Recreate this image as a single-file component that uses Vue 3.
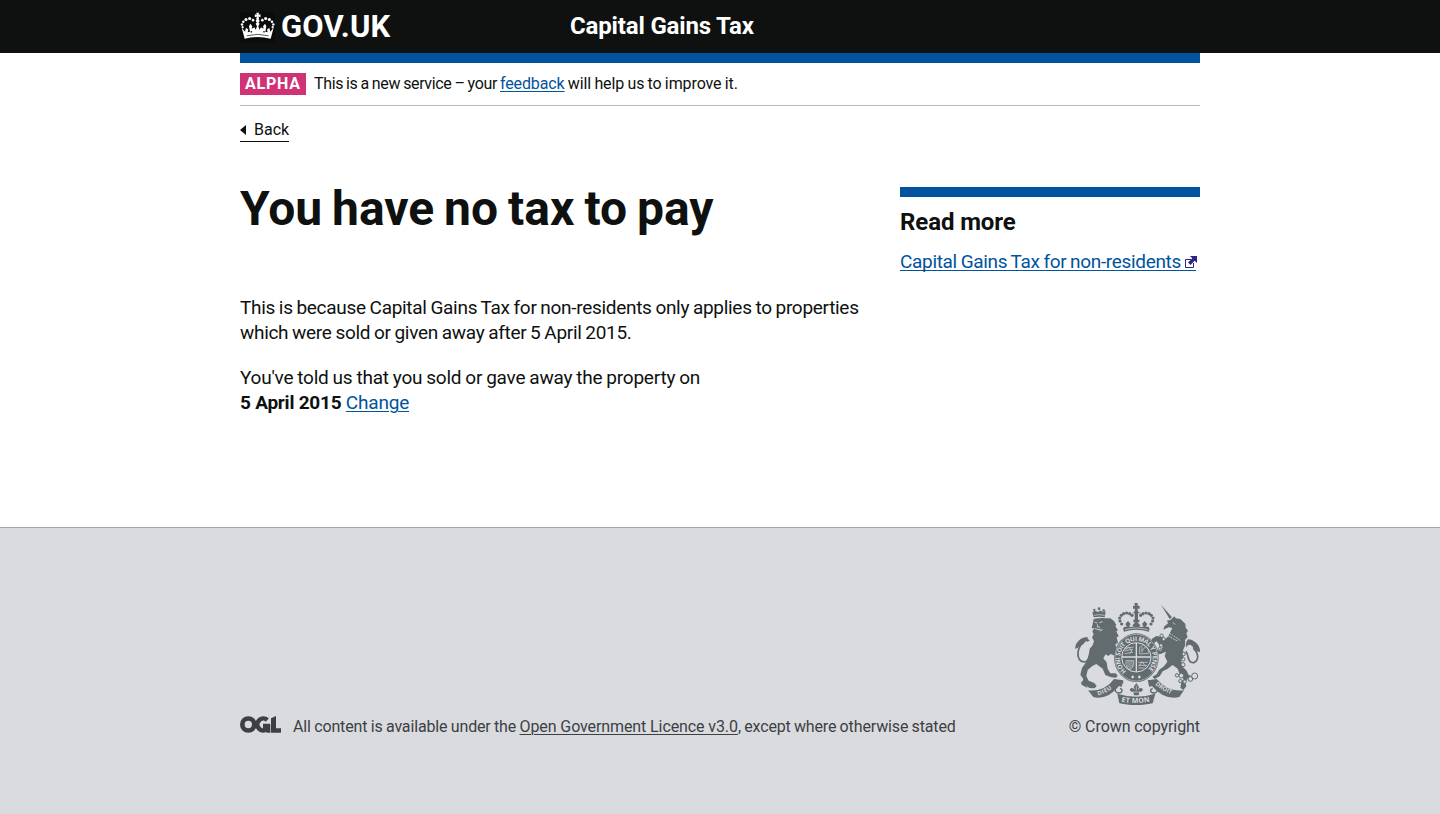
<script setup>
const crownPearls = [
  [36, 73, 3.8], [38, 81, 3.4], [40, 65, 3.8], [48, 58, 4.6], [59, 55, 4.6], [69, 60, 4],
  [130, 73, 3.8], [128, 81, 3.4], [126, 65, 3.8], [118, 58, 4.6], [107, 55, 4.6], [97, 60, 4],
]
const archPearls = [
  [185, 87], [180, 78], [179, 69], [184, 61], [191, 56], [200, 54], [209, 56], [216, 61],
  [273, 87], [278, 78], [279, 69], [274, 61], [267, 56], [258, 54], [249, 56], [242, 61],
]
const chain = [[305, 122, 5], [311, 132, 5], [303, 151, 5], [299, 161, 4], [371, 177, 5], [370, 193, 5], [369, 209, 6], [351, 241, 5], [364, 242, 7], [361, 258, 5], [374, 260, 5], [391, 252, 7], [404, 243, 9]]
</script>

<template>
  <div class="page">
    <header class="top">
      <div class="wrap top-row">
        <a class="logo">
          <svg class="crown" viewBox="30 36 105 92" aria-hidden="true">
            <rect x="30" y="36" width="105" height="92" fill="#0a0b0b" />
            <g fill="#fff">
              <path d="M78.500 38h9l-2 6 6-2v9l-6-2 2 8h-9l2-8-6 2v-9l6 2z" />
              <circle cx="83" cy="62" r="5.500" />
              <circle v-for="(p, i) in crownPearls" :key="i" :cx="p[0]" :cy="p[1]" :r="p[2]" />
              <path d="M35 82l10 13 3-12 7 5-2 8 7-1-3-17 4-7 6 7-2 8 8-5 4 8 4-11-4-7 6-7 6 7-4 7 4 11 4-8 8 5-2-8 6-7 4 7-3 17 7 1-2-8 7-5 3 12 10-13-9 34Q83 105 44 116z" />
            </g>
            <g fill="#0a0b0b"><circle cx="64" cy="95" r="2.500" /><circle cx="102" cy="95" r="2.500" /></g>
            <path d="M50 107Q83 98 116 107" fill="none" stroke="#0a0b0b" stroke-width="2" />
          </svg>
          <span class="brand">GOV.UK</span>
        </a>
        <span class="service">Capital Gains Tax</span>
      </div>
    </header>

    <div class="wrap">
      <div class="blue-bar"></div>
      <div class="phase">
        <strong class="tag">ALPHA</strong>
        <span><span class="intro">This is a new service – your </span><a class="link feedback">feedback</a><span class="outro"> will help us to improve it.</span></span>
      </div>
      <a class="back"><i class="arrow"></i><span>Back</span></a>

      <main class="columns">
        <section class="content">
          <h1>You have no tax to pay</h1>
          <p><span class="reason">This is because Capital Gains Tax for non-residents only applies to properties<br />which were sold or given away after 5 April 2015.</span></p>
          <p><span class="answer">You've told us that you sold or gave away the property on</span><br /><strong class="date">5 April 2015 </strong><a class="link change">Change</a></p>
        </section>
        <aside>
          <h2>Read more</h2>
          <a class="external"><span>Capital Gains Tax for non-residents</span>
            <svg viewBox="0 0 12 12" aria-hidden="true"><path d="M6 3.500H.5v8h8V7" fill="none" stroke="#2e2583" /><path d="M5 0h7v7L9.700 4.700 5.500 9 3 6.500 7.300 2.300z" fill="#2e2583" /></svg>
          </a>
        </aside>
      </main>
    </div>

    <footer>
      <div class="wrap foot">
        <div class="licence">
          <svg class="ogl" viewBox="0 0 123 51" aria-hidden="true">
            <g fill="none" stroke="#3c4044" stroke-width="14">
              <circle cx="25" cy="25.500" r="18" />
              <path d="M82 12A18 18 0 1 0 83 38V30H69" />
            </g>
            <path d="M76 25h15v25H80zM93 7l15-7v37h15v13H93z" fill="#3c4044" />
          </svg>
          <span><span class="licence-start">All content is available under the </span><a class="licence-link">Open Government Licence v3.0</a><span class="licence-end">, except where otherwise stated</span></span>
        </div>
        <div class="copyright">
          <svg class="arms" viewBox="45 24 375 306" aria-hidden="true">
            <defs>
              <path id="motto" d="M200 228A49 50 0 1 1 258 228" />
              <path id="left-scroll" d="M115 302Q145 292 172 268" />
              <path id="right-scroll" d="M285 269Q312 292 350 303" />
              <path id="mid-scroll" d="M184 320Q228 329 273 319" />
            </defs>
            <g fill="#626c6e">
              <!-- lion -->
              <path d="M101 67L97 52l8-5 10 4 5-5 7 4 10-1-3 18Q118 63 101 67z" />
              <circle cx="117" cy="41" r="4" /><circle cx="103" cy="45" r="3.500" /><circle cx="131" cy="46" r="3.500" />
              <path d="M101 72Q120 68 139 70L151 70 162 78 169 90 166 94 174 106 169 109 176 124 170 127 174 143 166 148 169 158 181 166 174 174 181 181 165 182 152 177 145 183 137 178 130 190 140 202 143 221 151 235 167 235 173 242 168 248 154 247 136 240 128 221 109 207 97 213 83 225 79 243 86 257 103 264 110 273 104 280 88 279 80 272 71 272 66 263 70 252 61 239 66 219 77 203 86 184 89 161 98 151 102 139 96 127 101 118 97 109 103 100 95 100 98 87z" />
              <path d="M83 279l-18-10-2-9 12 1z" />
              <path d="M78 138Q65 155 46 162 44 148 58 135 68 126 83 126 80 132 90 136 81 143 78 138z" />
              <path d="M61 152C47 178 55 201 74 201C91 198 84 181 93 169" fill="none" stroke="#626c6e" stroke-width="5" />
              <!-- unicorn -->
              <path d="M303 29L336 67 329 72z" />
              <path d="M310 104L313 94 325 84 320 77 332 74 343 64 347 70 361 72 376 86 377 98 384 107 379 115 383 126 375 135 376 151 369 166 373 181 364 195 366 214 379 226 386 240 393 242 382 252 376 263 379 274 370 285 361 278 364 262 371 252 361 243 353 221 338 210 322 222 308 229 299 244 284 252 277 245 290 238 297 225 312 214 322 200 314 183 318 170 300 178 286 174 290 165 303 167 309 153 298 150 290 139 277 147 275 132 289 123 306 125 315 134 325 123 337 99 326 97z" />
              <path d="M384 133Q395 132 406 142 421 154 420 171 405 169 399 163 402 155 392 150 382 147 379 158 376 141 384 133z" />
              <path d="M401 160C425 186 407 208 394 202C379 194 389 180 377 169" fill="none" stroke="#626c6e" stroke-width="5" />
              <!-- crown -->
              <path d="M223 24h10v8h6v9h-7l3 10 8 4H216l7-4 2-10h-6v-9h6z" />
              <circle v-for="(p, i) in archPearls" :key="i" :cx="p[0]" :cy="p[1]" r="4.800" />
              <path d="M224 54h10v20h4v8h-18v-8h4zM189 101l4-6h8l-5-8 8-9 8 9-5 8h14l-4-4 12-12 12 12-4 4h14l-5-8 8-9 8 9-5 8h8l4 6-3 9Q229 98 192 110z" />
              <!-- garter -->
              <ellipse cx="229" cy="188" rx="67" ry="73" />
              <!-- scrolls -->
              <path d="M84 286Q134 291 162 252L190 256 185 276 177 273Q142 316 100 306z" />
              <path d="M372 286Q322 291 290 252L263 256 268 276 276 273Q312 316 358 306z" />
              <path d="M172 296Q229 314 286 296L278 325Q228 336 178 325z" />
            </g>
            <g fill="none" stroke="#626c6e" stroke-width="4">
              <path d="M190 262C163 272 160 290 174 294C188 294 190 284 180 280" />
              <path d="M268 262C295 272 298 290 284 294C270 294 268 284 278 280" />
            </g>
            <g fill="none" stroke="#dadbdf">
              <ellipse cx="229" cy="188" rx="64" ry="70" stroke-width="1.500" />
              <circle cx="229" cy="187" r="44" stroke-width="3" />
              <path d="M229 144v86M186 186h86" stroke-width="4" />
              <path d="M193 160l28-4M193 168l26-5M194 176l25-4M235 202h28M235 211h25M235 219h18M239 157l11-8 15 14v12l-26 2zM198 197h23v12q-4 12-11 16-10-6-12-16zM204 198v20M210 198v25M216 198v19" stroke-width="2" />
              <path d="M197 164l9-8 10 12-8 7M237 214l9-14 13 17M246 156v16M256 156l-11 12" stroke-width="2" />
              <path d="M195 104Q229 94 263 104" stroke-width="2" />
              <path d="M102 61Q118 57 134 61" stroke-width="2" />
              <path d="M322 111Q342 122 362 138M318 119Q336 129 354 139" stroke-width="3" stroke-dasharray="5 3" />
              <path d="M104 82l8 2M118 83l10-3M113 88l-1 8 8 1M104 100l10 4 8-1M128 104l-9 4" stroke-width="2.500" />
              <path d="M311 92l10-6M338 83l8 5" stroke-width="2" />
            </g>
            <g fill="none" stroke="#626c6e" stroke-width="3">
              <circle v-for="(p, i) in chain" :key="i" :cx="p[0]" :cy="p[1]" :r="p[2]" fill="#dadbdf" />
            </g>
            <path fill="#626c6e" d="M229 264l8 12-4 10q8-12 15-4 2 8-10 9l-2 10h-14l-2-10q-12-1-10-9 7-8 15 4l-4-10z" />
            <path fill="none" stroke="#dadbdf" stroke-width="2" d="M218 291h22M229 272v14" />
            <g fill="#dadbdf" font-family="Open Sans, sans-serif" font-weight="700">
              <path d="M218 241l5 5-5 5-5-5zM238 241l5 5-5 5-5-5z" />
              <text font-size="19" textLength="240" lengthAdjust="spacing"><textPath href="#motto" textLength="240">HONI SOIT QUI MAL Y PENSE</textPath></text>
              <text font-size="18" letter-spacing="1"><textPath href="#left-scroll">DIEU</textPath></text>
              <text font-size="18"><textPath href="#right-scroll">DROIT</textPath></text>
              <text font-size="21" textLength="86"><textPath href="#mid-scroll">ET MON</textPath></text>
            </g>
          </svg>
          <span class="crown-text">© Crown copyright</span>
        </div>
      </div>
    </footer>
  </div>
</template>

<style>
body { background: #fff; }
</style>

<style scoped>
* { box-sizing: border-box; }
.page { height: 814px; display: flex; flex-direction: column; overflow: hidden; color: #0e1110; font-family: "Roboto", "Liberation Sans", sans-serif; font-size: 19px; line-height: 25px; white-space: nowrap; }
.wrap { width: 960px; margin: 0 auto; }
.top { height: 53px; background: #0e1110; color: #fff; }
.top-row { display: grid; grid-template-columns: 330px 1fr; height: 53px; }
.logo { display: flex; padding-top: 12px; }
.crown { width: 35px; height: 31px; flex: none; }
.brand { margin-left: 6px; font-size: 31px; line-height: 30px; font-weight: 700; letter-spacing: 0.2px; }
.service { padding-top: 11px; font-size: 24px; line-height: 30px; font-weight: 700; letter-spacing: -0.16px; }
.blue-bar { height: 10px; background: #00539c; }
.phase { display: flex; align-items: center; height: 43px; border-bottom: 1px solid #b6b9bb; font-size: 16px; line-height: 20px; white-space: pre; }
.tag { width: 66px; height: 22px; margin-right: 8px; padding-left: 5px; background: #cf3375; color: #fff; font-weight: 700; letter-spacing: 0.75px; line-height: 22px; }
.intro { letter-spacing: -0.36px; word-spacing: -0.6px; }
.feedback { letter-spacing: -0.12px; }
.outro { letter-spacing: -0.1px; word-spacing: -0.6px; }
.link { color: #00539c; text-decoration: underline; text-decoration-thickness: 1px; text-underline-offset: 2px; }
.back { display: flex; width: 49px; height: 22px; margin-top: 14px; padding-bottom: 2px; border-bottom: 1px solid #0e1110; align-items: center; font-size: 16px; line-height: 20px; }
.arrow { width: 0; height: 0; margin-right: 8px; border: 5px solid transparent; border-left-width: 0; border-right: 6px solid #0e1110; }
.columns { display: grid; grid-template-columns: 630px 300px; column-gap: 30px; padding-top: 45px; }
h1 { margin: -3px 0 61px; font-size: 48px; line-height: 50px; font-weight: 700; letter-spacing: -0.05px; word-spacing: -1.8px; }
p { margin: 0 0 20px; }
.reason { letter-spacing: -0.3px; word-spacing: -0.6px; }
.answer { letter-spacing: -0.22px; word-spacing: -0.5px; }
.date { letter-spacing: -0.23px; white-space: pre; }
.change { letter-spacing: -0.2px; }
aside { border-top: 10px solid #00539c; }
h2 { margin: 10px 0 12px; font-size: 24px; line-height: 30px; font-weight: 700; letter-spacing: -0.1px; }
.external { display: flex; align-items: flex-start; width: 296px; height: 22px; color: #00539c; border-bottom: 1px solid #00539c; letter-spacing: -0.33px; word-spacing: -0.6px; }
.external svg { flex: none; width: 12px; height: 12px; margin: 7px -1px 0 auto; }
footer { margin-top: auto; height: 287px; padding-top: 75px; background: #dadbdf; border-top: 1px solid #a1a5a9; color: #3c4044; font-size: 16px; line-height: 20px; }
.foot { display: flex; justify-content: space-between; align-items: flex-end; height: 134px; }
.licence { display: flex; white-space: pre; }
.ogl { width: 41px; height: 17px; margin: -1px 12px 0 0; }
.licence-start { letter-spacing: -0.15px; word-spacing: -0.4px; }
.licence-link { letter-spacing: -0.1px; text-decoration: underline; text-decoration-thickness: 1px; text-underline-offset: 2px; }
.licence-end { letter-spacing: -0.13px; word-spacing: -0.6px; }
.crown-text { letter-spacing: -0.07px; }
.copyright { display: flex; flex-direction: column; align-items: flex-end; gap: 12px; }
.arms { width: 125px; height: 102px; }
</style>
